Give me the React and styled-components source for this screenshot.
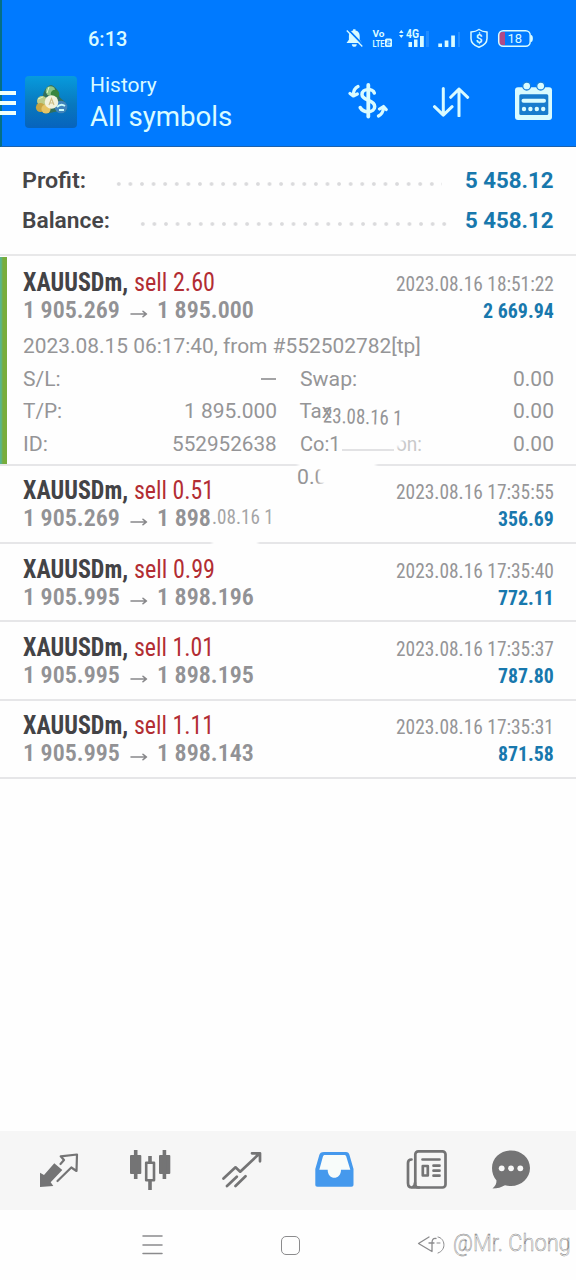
import React, { useLayoutEffect, useRef, useState } from "react";

import styled, { createGlobalStyle, css } from "styled-components";

const GlobalStyle = createGlobalStyle`
  * {
    box-sizing: border-box;
  }

  body {
    margin: 0;
    background: #fefefe;
    font-family: Roboto, "Liberation Sans", sans-serif;
  }
`;

const Screen = styled.div`
  display: flex;
  flex-direction: column;
  width: 576px;
  height: 1280px;
  overflow: hidden;
  background: #fefefe;
`;

const Header = styled.header`
  height: 147px;
  flex: none;
  color: #d9fbff;
  background: #007aff;
  border-left: 2px solid #046f86;
  border-bottom: 1px solid #1c62ad;
`;

const StatusBar = styled.div`
  display: flex;
  align-items: center;
  height: 60px;
  padding: 18px 42px 0 86px;
`;

const StatusIcons = styled.div`
  display: flex;
  align-items: center;
  margin-left: auto;
  margin-top: -2px;
`;

const AppBar = styled.div`
  display: flex;
  height: 86px;
  padding-top: 14px;
`;

const MenuButton = styled.div`
  display: flex;
  flex-direction: column;
  gap: 6px;
  width: 23px;
  padding-top: 17px;
  margin-left: -2px;
  margin-right: 2px;
`;

const MenuLine = styled.span`
  width: 16px;
  height: 4px;
  background: #effffb;
`;

const Logo = styled.div`
  width: 52px;
  height: 52px;
  margin-top: 2px;
  border-radius: 4px;
  background: linear-gradient(#079bdd, #0878be 55%, #0763bd);
`;

const Titles = styled.div`
  display: flex;
  flex-direction: column;
  margin-left: 13px;
`;

const Actions = styled.div`
  display: flex;
  align-items: center;
  height: 54px;
  margin-left: auto;
  padding-right: 23px;
  gap: 43px;
`;

const FitBox = styled.span`
  display: block;
  flex: none;
  width: ${(props) => props.$width}px;
  white-space: nowrap;
`;

const FitInner = styled.span`
  display: inline-block;
  transform-origin: 0 50%;
`;

const textKinds = {
  clock: css`
    font-size: 19.5px;
    font-weight: 500;
  `,
  subtitle: css`
    font-size: 20.5px;
    line-height: 23px;
  `,
  title: css`
    font-size: 27px;
    line-height: 36px;
    margin-top: 2px;
  `,
  summary: css`
    color: #454548;
    font-size: 22.5px;
    font-weight: 600;
  `,
  total: css`
    color: #1878ad;
    font-size: 22.5px;
    font-weight: 700;
  `,
  symbol: css`
    color: #434346;
    font-size: 25px;
    font-weight: 700;
    font-stretch: 75%;
    margin-right: 6px;
  `,
  side: css`
    color: #b22d33;
    font-size: 25px;
    font-stretch: 75%;
  `,
  price: css`
    color: #929295;
    font-size: 24.5px;
    font-weight: 600;
    font-stretch: 75%;
  `,
  date: css`
    color: #959597;
    font-size: 21px;
    font-stretch: 75%;
    margin-left: auto;
  `,
  profit: css`
    color: #1878ad;
    font-size: 20.5px;
    font-weight: 700;
    font-stretch: 75%;
    margin-left: auto;
  `,
  detail: css`
    color: #959597;
    font-size: 20.5px;
  `,
  watermark: css`
    margin: -4px 0 0 5px;
    color: #fff;
    font-size: 24px;
    font-weight: 300;
    -webkit-text-stroke: 0.5px #858585;
  `,
};

const Label = styled(FitBox)`
  ${(props) => textKinds[props.$kind]};
`;

// Squeezes a run of text to the given width, like a condensed cut would
function Text({ kind, width, children }) {
  const ref = useRef(null);
  const [scale, setScale] = useState(1);

  useLayoutEffect(() => {
    setScale(width / ref.current.offsetWidth);
  }, [width, children]);

  return (
    <Label $kind={kind} $width={width}>
      <FitInner ref={ref} style={{ transform: `scaleX(${scale})` }}>
        {children}
      </FitInner>
    </Label>
  );
}

const Summary = styled.section`
  flex: none;
  height: 109px;
  padding: 13px 22px 0;
  border-bottom: 2px solid #e8e8e9;
`;

const SummaryRow = styled.div`
  display: flex;
  align-items: center;
  height: 40px;
`;

const Dots = styled.div`
  flex: 1;
  height: 6px;
  margin: 8px ${(props) => props.$right}px 0 ${(props) => props.$left}px;
  background: radial-gradient(circle, #dadadc 1.4px, transparent 2.3px) 0 0 /
    11.6px 6px repeat-x;
`;

const Deal = styled.article`
  position: relative;
  flex: none;
  height: ${(props) => (props.$open ? 209.5 : 78.4)}px;
  padding: ${(props) => (props.$open ? 12.7 : 11.8)}px 22.5px 0 22.5px;
  border-bottom: 2px solid #e6e6e8;

  ${(props) =>
    props.$open &&
    css`
      &::before {
        content: "";
        position: absolute;
        left: 0;
        top: 1px;
        bottom: 0;
        width: 7px;
        background: linear-gradient(90deg, #58b58c 1px, #78ac3c 3px);
      }
    `};
`;

const DealRow = styled.div`
  display: flex;
  align-items: baseline;
  height: 27px;
  line-height: 28px;
`;

const DetailLine = styled.div`
  display: flex;
  height: 32px;
  margin-top: 7.4px;
  line-height: 32px;
`;

const DetailGrid = styled.div`
  display: grid;
  grid-template-columns: 254px 254px;
  column-gap: 23px;
  grid-auto-rows: 32.3px;
  line-height: 34px;
`;

const DetailCell = styled.div`
  display: flex;
  justify-content: space-between;
`;

const Dash = styled.span`
  width: 15px;
  height: 1.5px;
  margin: 16px 1px 0 0;
  background: #a3a3a5;
`;

const ArrowIcon = styled.svg`
  width: 18px;
  height: 10px;
  margin: 0 9.5px 0 10px;
  align-self: flex-start;
  position: relative;
  top: 13px;
`;

// Smudges left over the list: soft white patches and stray text
const Patch = styled.span`
  position: absolute;
  left: ${(props) => props.$x}px;
  top: ${(props) => props.$y}px;
  width: ${(props) => props.$w}px;
  height: ${(props) => props.$h}px;
  background: #fefefe;
  box-shadow: 0 0 3px 2px #fefefe;
`;

const Stray = styled.span`
  position: absolute;
  left: ${(props) => props.$x}px;
  top: ${(props) => props.$y}px;
  line-height: 24px;
  transform: rotate(${(props) => props.$turn || 0}deg);
  opacity: ${(props) => props.$fade || 1};
`;

const StrayLine = styled.span`
  position: absolute;
  left: 342px;
  top: 193px;
  width: 52px;
  height: 2px;
  background: #e2e2e4;
`;

const TabBar = styled.nav`
  display: flex;
  align-items: flex-start;
  flex: none;
  height: 79px;
  margin-top: auto;
  padding: 18px 0 0 38px;
  gap: 50px;
  color: #747475;
  background: #f6f6f6;

  svg {
    flex: none;
  }

  svg:last-child {
    margin-left: -8px;
  }
`;

const SystemBar = styled.div`
  display: flex;
  align-items: center;
  flex: none;
  height: 70px;
  padding-left: 142px;
  color: #8b8b8d;
`;

const Recents = styled.svg`
  width: 21px;
  height: 22px;
`;

const Home = styled.span`
  width: 19px;
  height: 19px;
  margin-left: 118px;
  border: 1.5px solid #8b8b8d;
  border-radius: 5px;
`;

const Back = styled.svg`
  flex: none;
  width: 31px;
  height: 24px;
  margin-left: 117px;
`;

const line = {
  fill: "none",
  stroke: "currentColor",
  strokeLinecap: "round",
  strokeLinejoin: "round",
};

function Status() {
  return (
    <svg width="190" height="22" viewBox="344 27 190 22" fill="currentColor">
      <path d="M346.500 43h15.500l-2.300-3.200v-4c0-3-1.700-4.800-4.200-5.300v-1.300h-2.400v1.300c-2.500.5-4.200 2.300-4.200 5.300v4zM351.800 44.300h5c0 3.400-5 3.400-5 0" />
      <path d="M348 29.500l15 15.500" stroke="#007aff" strokeWidth="1.800" />
      <path d="M346.800 30.500l15.500 16" stroke="currentColor" strokeWidth="1.300" />
      <g fontFamily="Roboto, sans-serif" fontWeight="700">
        <text x="372.500" y="37" fontSize="8.500" textLength="12" lengthAdjust="spacingAndGlyphs">
          Vo
        </text>
        <text x="372.500" y="47" fontSize="8.500" textLength="12" lengthAdjust="spacingAndGlyphs">
          LTE
        </text>
        <text x="406" y="38" fontSize="12" textLength="13" lengthAdjust="spacingAndGlyphs">
          4G
        </text>
      </g>
      <rect x="385" y="38.500" width="7" height="8.500" rx="1.500" />
      <path d="M387 41h3v1.800h-3v2h3.200" fill="none" stroke="#007aff" />
      <path d="M399 33l2.300-3 2.300 3zM399 35h4.600l-2.300 3z" />
      <path d="M408.500 42h3.500v5h-3.500zM414 39.500h3.500v7.500h-3.500zM420 36h3.800v11h-3.800zM438.300 43.500h3.700v3.500h-3.700zM444.700 40.500h3.700v6.500h-3.700zM451.200 35.500h3.700v11.500h-3.700z" />
      <path d="M426 31h3v16h-3zM458 32h2v15h-2z" opacity=".15" />
      <path
        d="M479 29.500c3 2 5 2.300 8 2.600v6.400c0 4-3 7-8 8.800-5-1.800-8-4.800-8-8.800v-6.400c3-.3 5-.6 8-2.600z"
        fill="none"
        stroke="currentColor"
        strokeWidth="1.500"
      />
      <text
        x="475.700"
        y="42.700"
        fontSize="12"
        fontWeight="600"
        fontFamily="Roboto, sans-serif"
      >
        $
      </text>
      <path d="M502 32h3v13h-3a3 3 0 0 1-3-3v-7a3 3 0 0 1 3-3" fill="#b04a86" />
      <rect
        x="498.700"
        y="30.700"
        width="31.500"
        height="15.600"
        rx="4.500"
        fill="none"
        stroke="currentColor"
        strokeWidth="1.500"
      />
      <path d="M531 35c2.500 0 2.500 7 0 7z" />
      <text x="507.500" y="43.300" fontSize="13" fontFamily="Roboto, sans-serif">
        18
      </text>
    </svg>
  );
}

function LogoMark() {
  return (
    <svg width="52" height="52" viewBox="0 0 52 52">
      <path
        d="M26 9c4 1 8 6 8 10s8 6 8 12-4 6-9 5-7 2-12 1-9-2-9-7 5-6 6-11 4-9 8-10"
        fill="#33705c"
      />
      <circle cx="25.500" cy="15" r="4.800" fill="#8cc587" />
      <circle cx="30" cy="18" r="4.300" fill="#37853f" />
      <circle cx="17" cy="25" r="5" fill="#bccb88" />
      <circle cx="15.500" cy="31.500" r="4.600" fill="#c6a544" />
      <circle cx="21" cy="33" r="4.600" fill="#e6c466" />
      <circle cx="36" cy="31" r="6.300" fill="#4184bd" />
      <path
        d="M32 31q4-4 8-1M34 34h5"
        stroke="#c9fbfa"
        strokeWidth="1.800"
        fill="none"
      />
      <circle cx="26.500" cy="26" r="6.800" fill="#f2f2dc" />
      <path
        d="M24 29l2.500-6.500L29 29M25 27h3.500"
        stroke="#cdbb83"
        strokeWidth="1.100"
        fill="none"
      />
      <path d="M24 11l-2 6M13 23l5-2" stroke="#dcf7c8" fill="none" />
    </svg>
  );
}

function ExchangeIcon() {
  return (
    <svg width="40" height="36" viewBox="0 0 40 36" {...line} strokeWidth="3.500">
      <path d="M20.300 2v31.500" strokeWidth="3.800" />
      <path d="M26.300 10C25 5.500 14 5 14 11.500c0 6.500 12.700 5 12.700 12 0 6.500-11 7-14.500 1" />
      <path d="M10 3.500C7 5 5.500 8 5.300 11.500M2 10.500l3.300 2.500 4-2" strokeWidth="3.200" />
      <path
        d="M30.500 33c3-1.500 4.800-5 5-8.500M31.500 26l4-2.500 2.700 3"
        strokeWidth="3.200"
      />
    </svg>
  );
}

function SortIcon() {
  return (
    <svg width="40" height="32" viewBox="-1 -1 40 32" {...line} strokeWidth="3">
      <path d="M11.300 2.500V29M2.500 20.700l8.800 8.500 8.800-8.500M27 30V3M18.700 11.300L27 3l8.700 8.300" />
    </svg>
  );
}

function CalendarIcon() {
  return (
    <svg width="39" height="40" viewBox="0 0 39 40" fill="currentColor">
      <rect x="1" y="6.300" width="37" height="32.700" rx="3" />
      <rect x="5.300" y="13.300" width="29" height="20.700" rx="1.500" fill="#187ccd" />
      <g stroke="#167edc" strokeWidth="1.300">
        <circle cx="12.700" cy="5" r="4" />
        <circle cx="26.700" cy="5" r="4" />
      </g>
      <path d="M9.500 19.800h20.500" stroke="currentColor" strokeWidth="4" strokeLinecap="round" />
      <circle cx="10" cy="28" r="2.200" />
      <circle cx="16.400" cy="28" r="2.200" />
      <circle cx="22.800" cy="28" r="2.200" />
      <circle cx="29.200" cy="28" r="2.200" />
    </svg>
  );
}

function QuotesIcon() {
  return (
    <svg width="42" height="42" viewBox="-1 -3 42 42">
      <path
        d="M1 20.700L5 23l10.300-11.700 8 6.700-11.600 12.300 2.600 3.700L1 35z"
        fill="currentColor"
      />
      <path
        d="M21.500 12L25 8l-3.300-3.700L38 2.500l-.5 16.500-5.200-3.500L18.500 29"
        {...line}
        strokeWidth="2.200"
      />
    </svg>
  );
}

function CandlesIcon() {
  return (
    <svg width="42" height="42" viewBox="1 0 42 42" fill="currentColor">
      <rect x="1" y="6" width="11.300" height="19" rx="1" />
      <rect x="30" y="6" width="11.300" height="19" rx="1" />
      <path d="M6.700 1v29M35.400 1v29M21 7v6M21 32v9" stroke="currentColor" strokeWidth="3.600" />
      <rect x="17.200" y="13.700" width="7.800" height="17.500" {...line} strokeWidth="2.600" />
    </svg>
  );
}

function TradeIcon() {
  return (
    <svg width="42" height="42" viewBox="0.500 -2 42 42" {...line} strokeWidth="2.700">
      <path d="M2 27.500l12-11.200 4.700 4.400L38 2.500M30.500 2.300h8v8M5.500 35l9.800-9.300M14 35l10-9.700" />
    </svg>
  );
}

function HistoryIcon() {
  return (
    <svg width="42" height="42" viewBox="0 -2 42 42">
      <path
        d="M10 1h22c2 0 3 1 3.500 3l4 14v15.500c0 1.500-.7 2.200-2.200 2.200H3.500c-1.500 0-2.200-.7-2.200-2.200V18l4-14C6 2 7 1 10 1z"
        fill="#4599ed"
      />
      <path
        d="M5.300 18.700l3.500-12.700c.4-1.400 1-2 2.300-2h19c1.300 0 2 .6 2.300 2l3.900 12.700H27c0 10.700-13.300 10.700-13.300 0z"
        fill="#f8fcfa"
      />
    </svg>
  );
}

function NewsIcon() {
  return (
    <svg width="42" height="42" viewBox="0 0 42 42" {...line} strokeWidth="2.700">
      <rect x="9.300" y="2.300" width="30.200" height="36.200" rx="3" />
      <path d="M5.500 10.500c-2.500 0-3.500 1-3.500 3.500v20c0 3 1 4.500 4 4.500h7M9 34c0 2.500-1 4-3 4.500" />
      <path d="M16.500 10.500h17M27.500 16.700H33.500M27.500 21.700H33.500M27.500 26.700H33.500" />
      <rect x="16.800" y="17" width="5" height="9.500" />
    </svg>
  );
}

function ChatIcon() {
  return (
    <svg width="42" height="42" viewBox="0 0 42 42">
      <path
        d="M21 1.500c10.500 0 19 7.500 19 17.500s-8.500 18-19 18c-2 0-4-.2-6-.8-3.500 2-7.500 3.300-12.500 3.300 3-2.500 4-5 4-8C3.500 28 2 24 2 19 2 9 10.500 1.500 21 1.500z"
        fill="currentColor"
      />
      <g fill="#f8f8f8">
        <circle cx="11.700" cy="19.300" r="2.900" />
        <circle cx="21" cy="19.300" r="2.900" />
        <circle cx="30.300" cy="19.300" r="2.900" />
      </g>
    </svg>
  );
}

function Price({ from, to, toWidth = 97 }) {
  return (
    <>
      <Text kind="price" width={97}>
        {from}
      </Text>
      <ArrowIcon viewBox="0 0 18 10" color="#88888b" {...line} strokeWidth="1.500">
        <path d="M1 5h15.500M13 2.300L16.500 5 13 7.700" />
      </ArrowIcon>
      <Text kind="price" width={toWidth}>
        {to}
      </Text>
    </>
  );
}

function DealItem({ deal, children }) {
  return (
    <Deal $open={deal.open}>
      <DealRow>
        <Text kind="symbol" width={105.5}>
          XAUUSDm,
        </Text>
        <Text kind="side" width={deal.sideWidth || 81}>
          sell {deal.volume}
        </Text>
        <Text kind="date" width={158}>
          {deal.date}
        </Text>
      </DealRow>
      <DealRow>
        <Price from={deal.from} to={deal.to} toWidth={deal.toWidth} />
        <Text kind="profit" width={deal.profitWidth || 56}>
          {deal.profit}
        </Text>
      </DealRow>
      {children}
    </Deal>
  );
}

const opened = {
  open: true,
  volume: "2.60",
  date: "2023.08.16 18:51:22",
  from: "1 905.269",
  to: "1 895.000",
  profit: "2 669.94",
  profitWidth: 71,
};

const smudged = {
  volume: "0.51",
  sideWidth: 80,
  date: "2023.08.16 17:35:55",
  from: "1 905.269",
  to: "1 898",
  toWidth: 54,
  profit: "356.69",
};

const deals = [
  {
    volume: "0.99",
    date: "2023.08.16 17:35:40",
    from: "1 905.995",
    to: "1 898.196",
    profit: "772.11",
  },
  {
    volume: "1.01",
    sideWidth: 80,
    date: "2023.08.16 17:35:37",
    from: "1 905.995",
    to: "1 898.195",
    profit: "787.80",
  },
  {
    volume: "1.11",
    sideWidth: 80,
    date: "2023.08.16 17:35:31",
    from: "1 905.995",
    to: "1 898.143",
    profit: "871.58",
  },
];

export default function App() {
  return (
    <Screen>
      <GlobalStyle />
      <Header>
        <StatusBar>
          <Text kind="clock" width={39}>
            6:13
          </Text>
          <StatusIcons>
            <Status />
          </StatusIcons>
        </StatusBar>
        <AppBar>
          <MenuButton>
            <MenuLine />
            <MenuLine />
            <MenuLine />
          </MenuButton>
          <Logo>
            <LogoMark />
          </Logo>
          <Titles>
            <Text kind="subtitle" width={66.5}>
              History
            </Text>
            <Text kind="title" width={142.5}>
              All symbols
            </Text>
          </Titles>
          <Actions>
            <ExchangeIcon />
            <SortIcon />
            <CalendarIcon />
          </Actions>
        </AppBar>
      </Header>

      <Summary>
        <SummaryRow>
          <Text kind="summary" width={64}>
            Profit:
          </Text>
          <Dots $left={27} $right={23} />
          <Text kind="total" width={89}>
            5 458.12
          </Text>
        </SummaryRow>
        <SummaryRow>
          <Text kind="summary" width={88}>
            Balance:
          </Text>
          <Dots $left={27} $right={12} />
          <Text kind="total" width={89}>
            5 458.12
          </Text>
        </SummaryRow>
      </Summary>

      <DealItem deal={opened}>
        <DetailLine>
          <Text kind="detail" width={397.5}>
            2023.08.15 06:17:40, from #552502782[tp]
          </Text>
        </DetailLine>
        <DetailGrid>
          <DetailCell>
            <Text kind="detail" width={38}>
              S/L:
            </Text>
            <Dash />
          </DetailCell>
          <DetailCell>
            <Text kind="detail" width={57}>
              Swap:
            </Text>
            <Text kind="detail" width={41}>
              0.00
            </Text>
          </DetailCell>
          <DetailCell>
            <Text kind="detail" width={39.5}>
              T/P:
            </Text>
            <Text kind="detail" width={93}>
              1 895.000
            </Text>
          </DetailCell>
          <DetailCell>
            <Text kind="detail" width={32}>
              Tax
            </Text>
            <Text kind="detail" width={41}>
              0.00
            </Text>
          </DetailCell>
          <DetailCell>
            <Text kind="detail" width={25}>
              ID:
            </Text>
            <Text kind="detail" width={105}>
              552952638
            </Text>
          </DetailCell>
          <DetailCell>
            <Text kind="detail" width={41}>
              Co:1
            </Text>
            <Text kind="detail" width={41}>
              0.00
            </Text>
          </DetailCell>
        </DetailGrid>
        <Stray $x={323} $y={149} $turn={2}>
          <Text kind="date" width={79}>
            23.08.16 1
          </Text>
        </Stray>
        <StrayLine />
        <Stray $x={396} $y={176} $fade={0.5}>
          <Text kind="detail" width={26}>
            on:
          </Text>
        </Stray>
        <Patch $x={390} $y={177} $w={10} $h={12} />
        <Patch $x={300} $y={206} $w={74} $h={8} />
      </DealItem>

      <DealItem deal={smudged}>
        <Stray $x={212} $y={39} $fade={0.85}>
          <Text kind="date" width={62}>
            .08.16 1
          </Text>
        </Stray>
        <Patch $x={274} $y={42} $w={8} $h={20} />
        <Stray $x={297} $y={-1}>
          <Text kind="detail" width={29}>
            0.0
          </Text>
        </Stray>
        <Patch $x={321} $y={2} $w={12} $h={14} />
        <Patch $x={214} $y={74} $w={42} $h={6} />
      </DealItem>

      {deals.map((deal) => (
        <DealItem key={deal.date} deal={deal} />
      ))}

      <TabBar>
        <QuotesIcon />
        <CandlesIcon />
        <TradeIcon />
        <HistoryIcon />
        <NewsIcon />
        <ChatIcon />
      </TabBar>

      <SystemBar>
        <Recents viewBox="0 0 21 22" {...line} strokeWidth="1.500">
          <path d="M1 2h19M1 11h19M1 19.500h19" />
        </Recents>
        <Home />
        <Back viewBox="0 0 31 24" {...line} strokeWidth="1.300">
          <path d="M12 4L1.500 10.500 15 18.500V10c0-3 1-5 4-4.500M12 10h5" />
          <path d="M21 4c7 1 9 13 0 16M20 10h3" strokeWidth="1" />
        </Back>
        <Text kind="watermark" width={118}>
          @Mr. Chong
        </Text>
      </SystemBar>
    </Screen>
  );
}
